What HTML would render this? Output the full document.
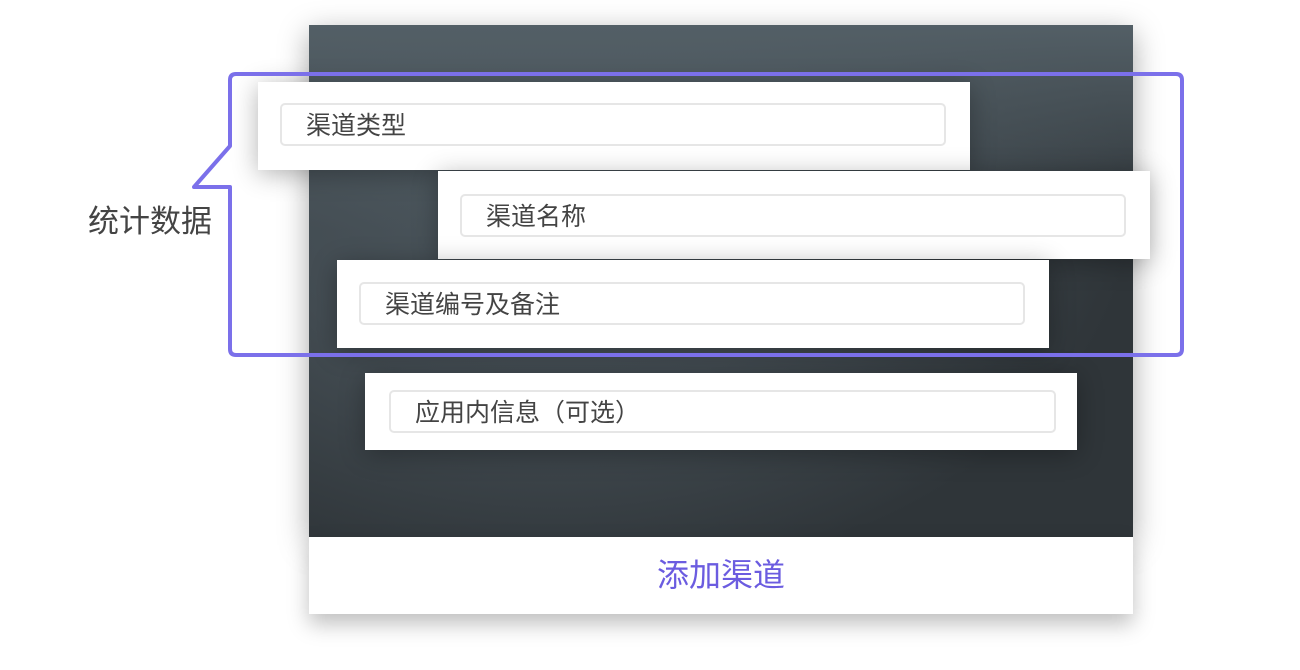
<!DOCTYPE html>
<html><head><meta charset="utf-8"><style>
body{margin:0;width:1300px;height:670px;background:#fff;position:relative;overflow:hidden;font-family:"Liberation Sans","Noto Sans CJK SC",sans-serif}
.panel{position:absolute;left:309px;top:25px;width:824px;height:512px;border-radius:3px 3px 0 0;background:radial-gradient(ellipse 70% 75% at 30% 35%,#4c575e 0%,#434c52 50%,#2f3539 100%),#2f3539;box-shadow:0 8px 30px rgba(0,0,0,.35)}
.panel:before{content:"";position:absolute;inset:0;background:linear-gradient(#535f66 0%,rgba(83,95,102,0) 40%)}
.foot{position:absolute;left:309px;top:537px;width:824px;height:77px;background:#fff;box-shadow:0 10px 20px rgba(0,0,0,.25);text-align:center;line-height:77px;font-size:32px;color:#6b5ce0}
.card{position:absolute;width:712px;background:#fff;box-shadow:0 4px 24px rgba(0,0,0,.3)}
.inp{position:absolute;left:22px;right:24px;height:43px;border:2px solid #e6e6e6;border-radius:5px;box-sizing:border-box;font-size:25px;color:#444;line-height:43px;padding-left:24px}
.lbl{position:absolute;left:88px;top:196px;font-size:31px;color:#444}
</style></head><body>
<div class="panel"></div>
<div class="foot">添加渠道</div>
<div class="card" style="left:258px;top:82px;height:88px"><div class="inp" style="top:21px">渠道类型</div></div>
<div class="card" style="left:438px;top:171px;height:88px"><div class="inp" style="top:23px">渠道名称</div></div>
<div class="card" style="left:337px;top:260px;height:88px"><div class="inp" style="top:22px">渠道编号及备注</div></div>
<div class="card" style="left:365px;top:373px;height:77px;width:712px"><div class="inp" style="top:17px;left:24px;right:21px">应用内信息（可选）</div></div>
<svg style="position:absolute;left:0;top:0" width="1300" height="670"><path d="M236 74 L1176 74 Q1182 74 1182 80 L1182 349 Q1182 355 1176 355 L236 355 Q230 355 230 349 L230 187 L194 187 L230 146 L230 80 Q230 74 236 74 Z" fill="none" stroke="#7b70ea" stroke-width="4" stroke-linejoin="round"/></svg>
<div class="lbl">统计数据</div>
</body></html>
